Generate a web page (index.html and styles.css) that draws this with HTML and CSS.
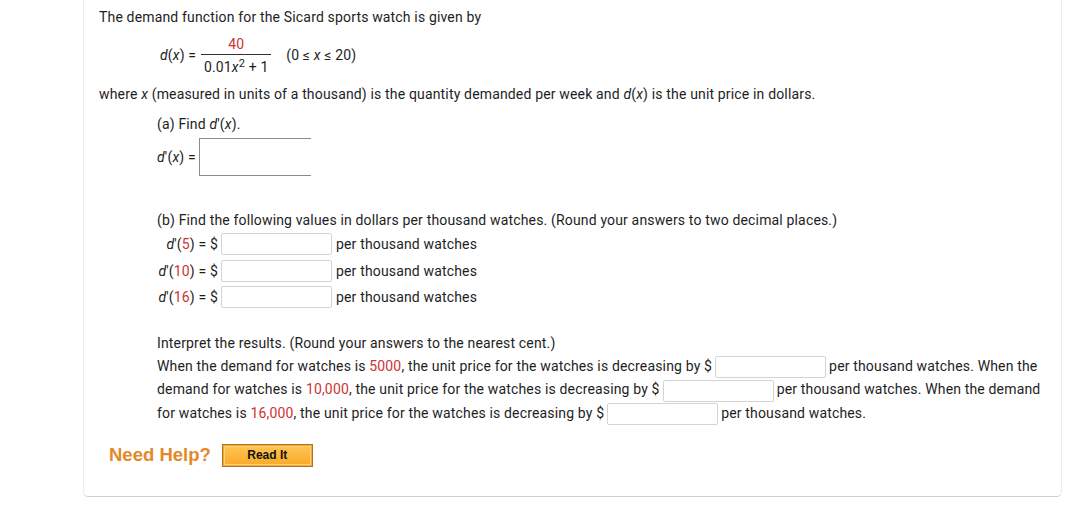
FILE: index.html
```html
<!DOCTYPE html>
<html lang="en">
<head>
<meta charset="utf-8">
<title>Sicard sports watch</title>
<link rel="stylesheet" href="styles.css">
</head>
<body>
<div class="card">
  <p class="line first">The demand function for the Sicard sports watch is given by</p>

  <div class="formula">
    <span class="lhs"><i>d</i>(<i>x</i>) =</span>
    <span class="frac">
      <span class="num red">40</span>
      <span class="den">0.01<i>x</i><sup>2</sup> + 1</span>
    </span>
    <span class="domain">(0 ≤ <i>x</i> ≤ 20)</span>
  </div>

  <p class="line where">where <i>x</i> (measured in units of a thousand) is the quantity demanded per week and <i>d</i>(<i>x</i>) is the unit price in dollars.</p>

  <div class="part">
    <p class="line parta">(a) Find <i>d</i>′(<i>x</i>).</p>
    <div class="deriv-row">
      <span class="deriv-label"><i>d</i>′(<i>x</i>) =</span>
      <span class="math-box"></span>
    </div>

    <p class="line partb">(b) Find the following values in dollars per thousand watches. (Round your answers to two decimal places.)</p>
    <div class="values">
      <div class="value-row">
        <span class="vlabel"><i>d</i>′(<span class="red">5</span>) = $</span>
        <span class="answer"></span>
        <span class="unit">per thousand watches</span>
      </div>
      <div class="value-row">
        <span class="vlabel"><i>d</i>′(<span class="red">10</span>) = $</span>
        <span class="answer"></span>
        <span class="unit">per thousand watches</span>
      </div>
      <div class="value-row">
        <span class="vlabel"><i>d</i>′(<span class="red">16</span>) = $</span>
        <span class="answer"></span>
        <span class="unit">per thousand watches</span>
      </div>
    </div>

    <p class="line interpret">Interpret the results. (Round your answers to the nearest cent.)</p>
    <p class="para">When the demand for watches is <span class="red">5000</span>, the unit price for the watches is decreasing by $<span class="answer inline"></span>per thousand watches. When the<br>demand for watches is <span class="red">10,000</span>, the unit price for the watches is decreasing by $<span class="answer inline"></span>per thousand watches. When the demand<br>for watches is <span class="red">16,000</span>, the unit price for the watches is decreasing by $<span class="answer inline"></span>per thousand watches.</p>
  </div>

  <div class="help">
    <span class="need">Need Help?</span>
    <span class="readit"><span class="readit-inner">Read It</span></span>
  </div>
</div>
</body>
</html>
```

FILE: styles.css
```css
html, body {
  margin: 0;
  padding: 0;
  background: #ffffff;
}

body {
  font-family: Roboto, "Liberation Sans", Arial, sans-serif;
  font-size: 14px;
  letter-spacing: 0.16px;
  color: #1e1e1e;
}

.card {
  box-sizing: border-box;
  width: 979px;
  margin-left: 83px;
  height: 497px;
  padding: 7px 15px 0 15px;
  border: 1px solid #ececec;
  border-top: none;
  border-bottom: 1px solid #cfcfcf;
  border-radius: 0 0 5px 5px;
}

.red { color: #cc3333; }

i { font-style: italic; }

.line {
  margin: 0;
  line-height: 20px;
  white-space: nowrap;
}

/* formula */
.formula {
  display: flex;
  align-items: center;
  margin: 7px 0 0 61px;
  height: 42px;
}

.lhs { line-height: 20px; }

.frac {
  display: inline-flex;
  flex-direction: column;
  align-items: center;
  width: 70px;
  margin: 0 15px 0 5px;
}

.num {
  display: block;
  width: 100%;
  text-align: center;
  line-height: 18px;
  padding-bottom: 1px;
  border-bottom: 1px solid #333;
}

.den {
  display: block;
  line-height: 18px;
  padding-top: 3px;
}

.den sup {
  font-size: 11px;
  line-height: 0;
  vertical-align: 5px;
}

.domain { line-height: 20px; }

.where { margin-top: 8px; }

/* parts */
.part { padding-left: 58px; }

.parta { margin-top: 10px; }

.deriv-row {
  display: flex;
  align-items: center;
  margin-top: 4px;
  height: 38px;
}

.deriv-label { margin-right: 3px; }

.math-box {
  box-sizing: border-box;
  width: 112px;
  height: 38px;
  border: 1px solid #8a8a8a;
  border-right: none;
}

.partb { margin-top: 34px; }

.values {
  display: flex;
  flex-direction: column;
  gap: 4.5px;
  margin-top: 3px;
}

.value-row {
  display: flex;
  align-items: center;
  height: 22px;
}

.vlabel {
  width: 61px;
  text-align: right;
  margin-right: 3px;
  white-space: nowrap;
}

.answer {
  box-sizing: border-box;
  display: inline-block;
  width: 111px;
  height: 22px;
  border: 1px solid #d4d4d4;
  border-radius: 2px;
  background: #fff;
}

.unit { margin-left: 4px; }

.interpret { margin-top: 25px; }

.para {
  margin: 2px 0 0 0;
  line-height: 23px;
  white-space: nowrap;
}

.answer.inline {
  vertical-align: middle;
  margin: 0 3px 0 3px;
}

/* help */
.help {
  display: flex;
  align-items: center;
  margin: 19px 0 0 10px;
}

.need {
  font-family: "Liberation Sans", Arial, sans-serif;
  font-weight: bold;
  font-size: 18.5px;
  letter-spacing: 0;
  color: #e3892b;
  margin-right: 11px;
}

.readit {
  box-sizing: border-box;
  display: inline-block;
  width: 91px;
  height: 23px;
  border: 1px solid #b0712c;
  background: #f7a92e;
  padding: 1px;
}

.readit-inner {
  box-sizing: border-box;
  display: flex;
  align-items: center;
  justify-content: center;
  height: 100%;
  border: 1px solid #ffd27a;
  background: linear-gradient(#fdc350, #f9ac2c);
  font-family: "Liberation Sans", Arial, sans-serif;
  font-weight: bold;
  font-size: 12px;
  letter-spacing: 0;
  color: #111;
}
```
